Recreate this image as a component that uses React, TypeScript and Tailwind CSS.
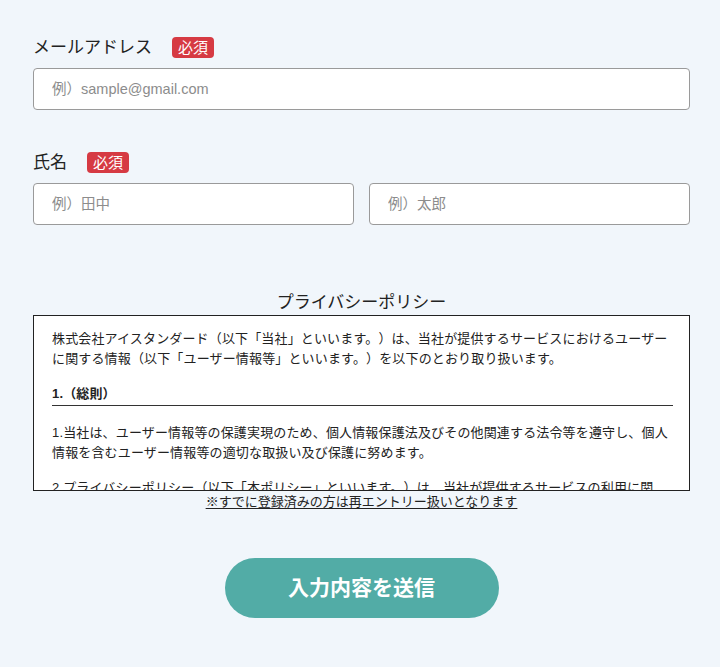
import React from "react";

const font = { fontFamily: '"Liberation Sans", "Noto Sans CJK JP", sans-serif' };

function Badge() {
  return (
    <span className="inline-flex h-[21px] items-center rounded-[4px] bg-[#d63a43] px-[6px] text-[15px] leading-none text-white">
      必須
    </span>
  );
}

export default function App() {
  return (
    <div className="min-h-[667px] w-[720px] bg-[#f1f6fb] text-[#222] [text-spacing-trim:space-all]" style={font}>
      <div className="ml-[33px] w-[657px] pt-[37px]">
        <div className="flex h-[21px] items-center gap-[20px]">
          <span className="text-[17px] leading-none">メールアドレス</span>
          <Badge />
        </div>
        <input
          className="mt-[10px] block h-[42px] w-full rounded-[4px] border border-[#9a9a9a] bg-white pl-[18px] text-[14.5px] outline-none [text-spacing-trim:space-all] placeholder:text-[#8c8c8c]"
          placeholder="例）sample@gmail.com"
        />

        <div className="mt-[42px] flex h-[21px] items-center gap-[20px]">
          <span className="text-[17px] leading-none">氏名</span>
          <Badge />
        </div>
        <div className="mt-[10px] flex gap-[15px]">
          <input
            className="block h-[42px] w-full min-w-0 flex-1 rounded-[4px] border border-[#9a9a9a] bg-white pl-[18px] text-[14.5px] outline-none placeholder:text-[#8c8c8c]"
            placeholder="例）田中"
          />
          <input
            className="block h-[42px] w-full min-w-0 flex-1 rounded-[4px] border border-[#9a9a9a] bg-white pl-[18px] text-[14.5px] outline-none placeholder:text-[#8c8c8c]"
            placeholder="例）太郎"
          />
        </div>

        <h2 className="mt-[65px] text-center text-[17px] leading-[25px]">プライバシーポリシー</h2>
        <div className="h-[176px] overflow-hidden border border-[#222] bg-white pl-[18px] pr-[16px] pt-[13px] text-[13px] leading-[20px] tracking-[0.15px]">
          <p>
            株式会社アイスタンダード（以下「当社」といいます。）は、当社が提供するサービスにおけるユーザーに関する情報（以下「ユーザー情報等」といいます。）を以下のとおり取り扱います。
          </p>
          <h3 className="mt-[15px] border-b border-[#333] pb-[1px] font-bold">1.（総則）</h3>
          <p className="mt-[17px]">
            1.当社は、ユーザー情報等の保護実現のため、個人情報保護法及びその他関連する法令等を遵守し、個人情報を含むユーザー情報等の適切な取扱い及び保護に努めます。
          </p>
          <p className="mt-[15px]">
            2.プライバシーポリシー（以下「本ポリシー」といいます。）は、当社が提供するサービスの利用に関し、当社が取得するユーザー情報等の取扱いについて定めるものです。
          </p>
        </div>
        <p className="mt-[2px] text-center text-[13px] leading-[17px] underline underline-offset-2">
          ※すでに登録済みの方は再エントリー扱いとなります
        </p>

        <div className="mt-[48px] flex justify-center">
          <button className="h-[60px] w-[274px] rounded-full bg-[#52aca6] text-[21px] font-bold text-white">
            入力内容を送信
          </button>
        </div>
      </div>
    </div>
  );
}
